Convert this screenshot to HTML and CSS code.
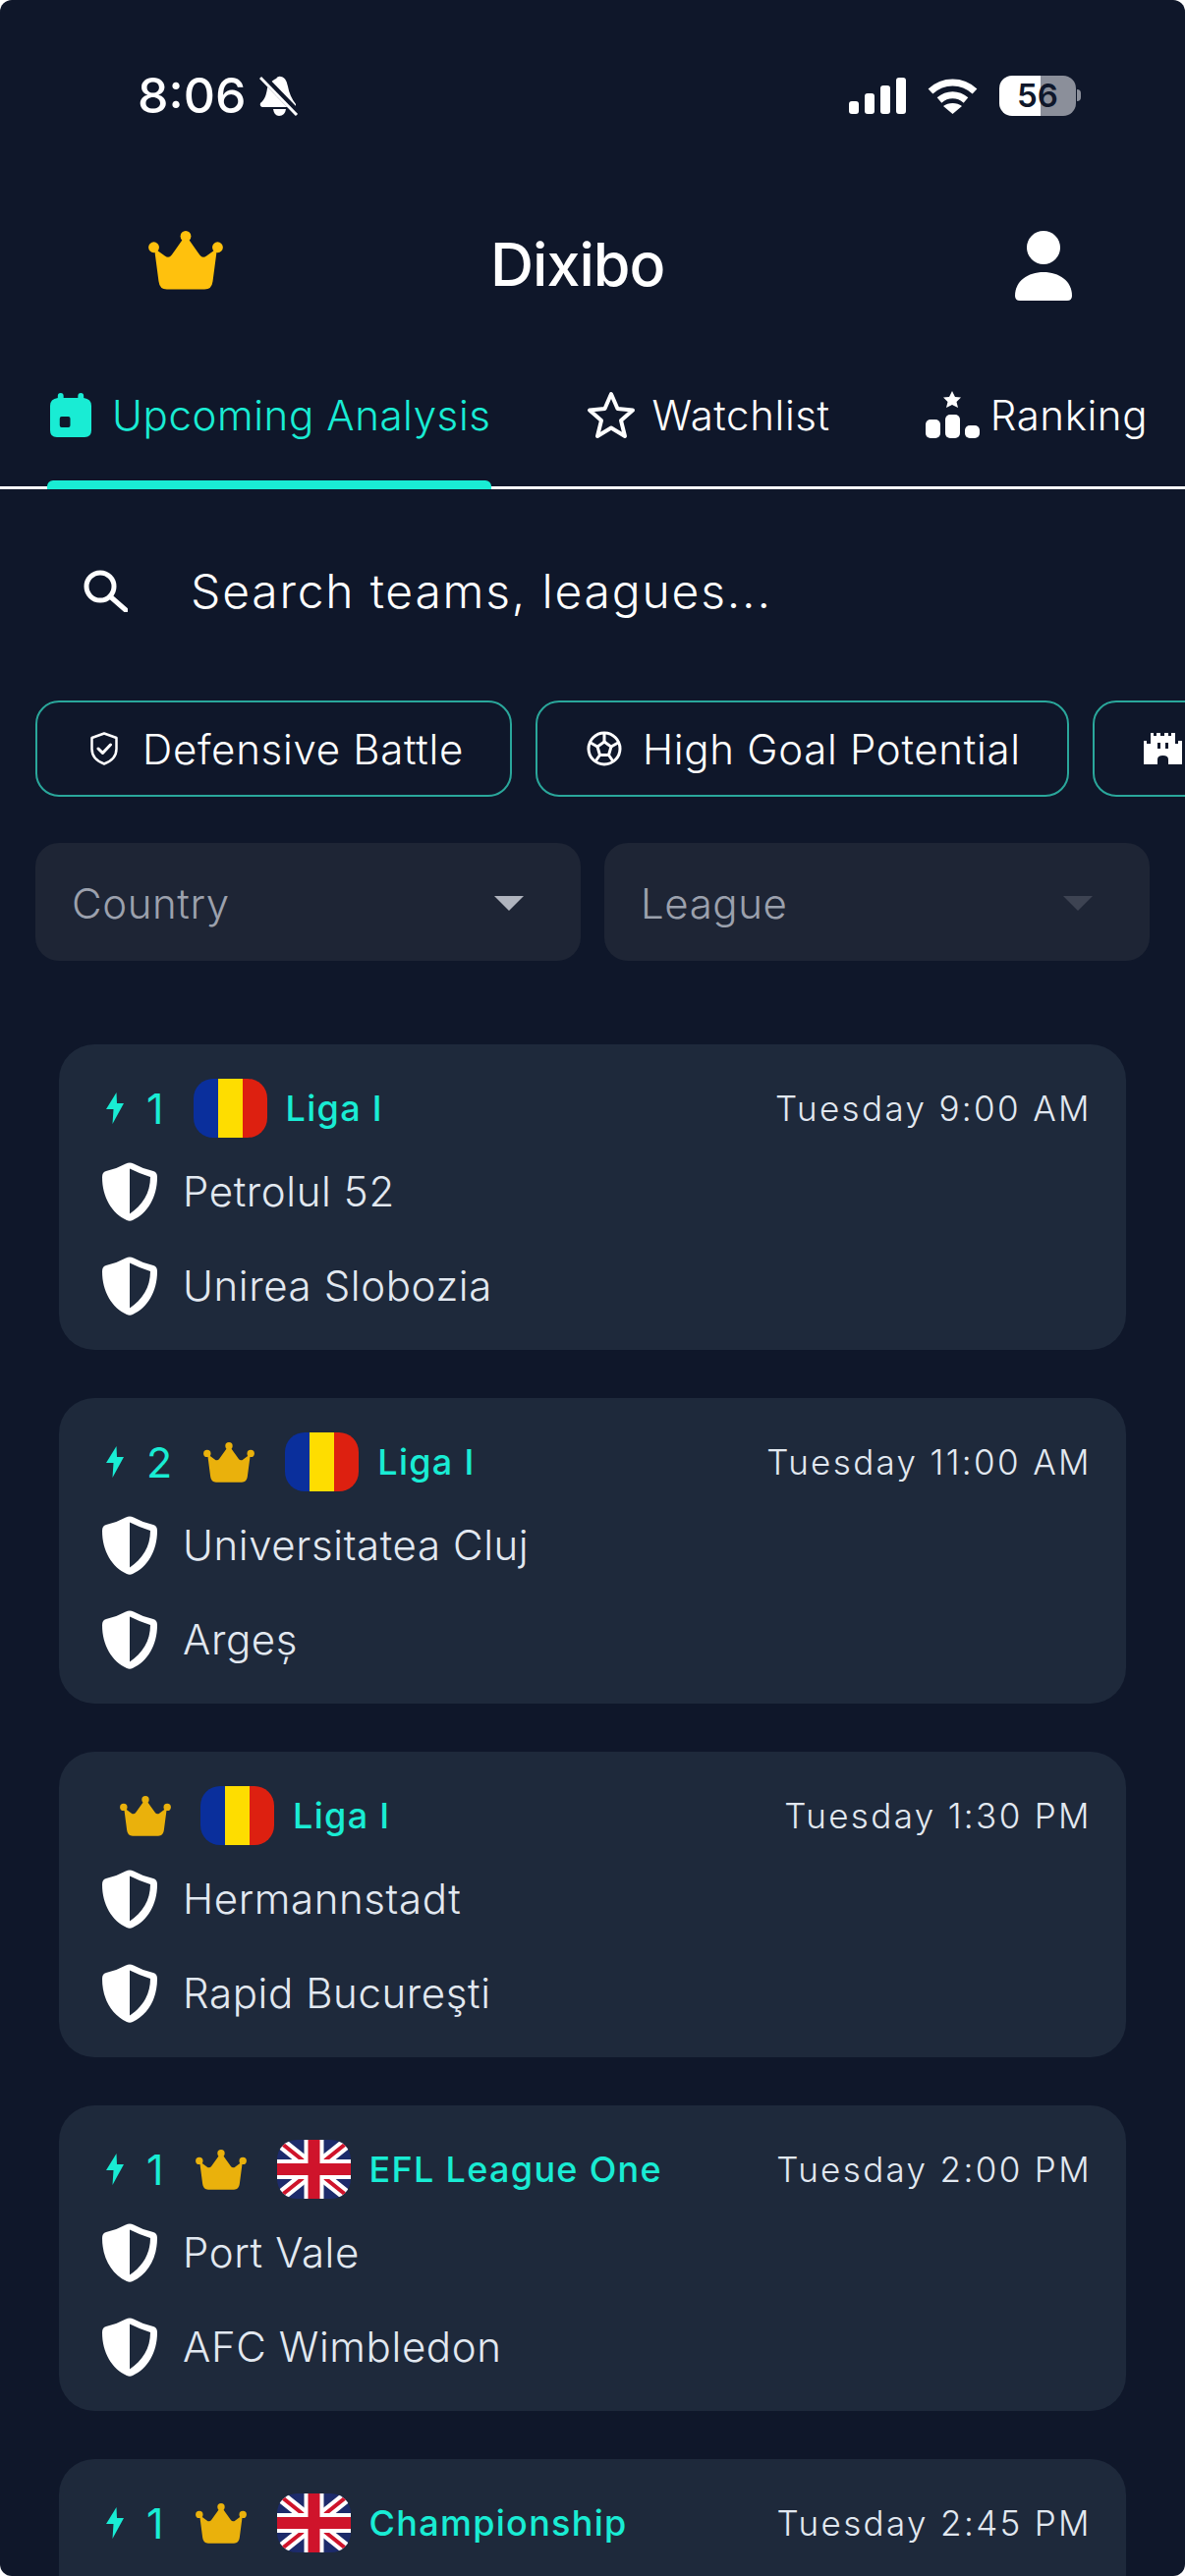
FILE: index.html
```html
<!DOCTYPE html>
<html lang="en">

<head>
  <meta charset="UTF-8">
  <meta name="viewport" content="width=device-width, initial-scale=1.0">
  <title>Dixibo</title>
  <link rel="stylesheet" href="styles.css">
</head>

<body>
  <svg class="defs" width="0" height="0" aria-hidden="true">
    <symbol id="crown" viewBox="0 0 77 61">
      <path d="M6 18 L10.500 52 Q11.500 60.500 19 60.500 L58 60.500 Q65.500 60.500 66.500 52 L71 18 L60 26 Q56 29 53 25 L41 8 L36 8 L24 25 Q21 29 17 26Z" />
      <circle cx="38.500" cy="5.500" r="5.500" />
      <circle cx="5.500" cy="17" r="5.500" />
      <circle cx="71.500" cy="17" r="5.500" />
    </symbol>
    <symbol id="bolt" viewBox="0 0 18 32">
      <path d="M10.500 0 L0 17 L7.500 17 L6.500 32 L18 11 L11 11Z" />
    </symbol>
    <symbol id="team-shield" viewBox="0 0 56 60">
      <path fill-rule="evenodd" d="M24 1.500 Q28 -0.500 32 1.500 Q42 7 52 9 Q56 10 56 15 C56 36 46 52 31 59 Q28 60.500 25 59 C10 52 0 36 0 15 Q0 10 4 9 Q14 7 24 1.500Z M28 6.500 L28 52.500 C41 44 49 31 49 15 Q39 12 28 6.500Z" />
    </symbol>
    <symbol id="flag-ro" viewBox="0 0 75 60">
      <rect width="25" height="60" fill="#0a2f9c" />
      <rect x="25" width="25" height="60" fill="#fedd00" />
      <rect x="50" width="25" height="60" fill="#dd2010" />
    </symbol>
    <symbol id="flag-uk" viewBox="0 0 75 60">
      <rect width="75" height="60" fill="#1d2b6b" />
      <path d="M0 0 L75 60 M75 0 L0 60" stroke="#fff" stroke-width="12" />
      <path d="M0 0 L75 60 M75 0 L0 60" stroke="#cf142b" stroke-width="4" />
      <path d="M37.5 0 V60 M0 30 H75" stroke="#fff" stroke-width="20" />
      <path d="M37.5 0 V60 M0 30 H75" stroke="#cf142b" stroke-width="12" />
    </symbol>
  </svg>

  <div class="screen">
    <div class="status-bar">
      <div class="status-left">
        <span class="clock">8:06</span>
        <svg class="bell" viewBox="0 0 40 41">
          <path fill="#fff" d="M22 1 C27 2 28 7 29 11 C30 17 33 24 37 29 L37 32 L3 32 Q0 31 1 28 C6 24 7 19 8 13 C9 8 13 5 17 3 Q19 0 22 1Z" />
          <path fill="#fff" d="M14 34 L27 34 Q26 41 20 41 Q15 41 14 34Z" />
          <path d="M2 0 L40 39" stroke="#0f172a" stroke-width="7" />
          <path d="M1 2 L38 40" stroke="#fff" stroke-width="3" />
        </svg>
      </div>
      <div class="status-right">
        <svg class="signal" viewBox="0 0 58 37" fill="#fff">
          <rect y="24" width="10" height="13" rx="3" />
          <rect x="16" y="16" width="10" height="21" rx="3" />
          <rect x="32" y="8" width="10" height="29" rx="3" />
          <rect x="48" width="10" height="37" rx="3" />
        </svg>
        <svg class="wifi" viewBox="0 0 51 37" fill="none" stroke="#fff" stroke-width="7">
          <path d="M3 14 C16 2 35 2 48 14" />
          <path d="M12 23 C20 16 31 16 39 23" />
          <path fill="#fff" stroke="none" d="M25.500 37 L16 29 C21 25 30 25 35 29Z" />
        </svg>
        <div class="battery">
          <span class="battery-level">56</span>
          <span class="battery-nub"></span>
        </div>
      </div>
    </div>

    <header class="app-header">
      <svg class="header-crown"><use href="#crown" /></svg>
      <h1>Dixibo</h1>
      <svg class="header-user" viewBox="0 0 58 71" fill="#fff">
        <circle cx="29" cy="17" r="17" />
        <path d="M0 66 C0 51 13 42 29 42 C45 42 58 51 58 66 Q58 71 53 71 L5 71 Q0 71 0 66Z" />
      </svg>
    </header>

    <nav class="tabs">
      <a class="tab tab-active">
        <svg class="tab-icon-calendar" viewBox="0 0 43 45" preserveAspectRatio="none" fill="#19ecd4">
          <path fill-rule="evenodd" d="M8 3 Q8 0 11 0 Q14 0 14 3 L14 5 L29 5 L29 3 Q29 0 32 0 Q35 0 35 3 L35 5 Q43 6 43 13 L43 38 Q43 45 36 45 L7 45 Q0 45 0 38 L0 13 Q0 6 8 5Z M12 24 Q10 24 10 26 L10 33 Q10 35 12 35 L19 35 Q21 35 21 33 L21 26 Q21 24 19 24Z" />
        </svg>
        Upcoming Analysis
      </a>
      <a class="tab">
        <svg class="tab-icon-star" viewBox="0 0 50 49" fill="none" stroke="#fff" stroke-width="4" stroke-linejoin="round">
          <path d="M25 3 L31.500 18 L47 19.500 L35 30 L39 46 L25 37.500 L11 46 L15 30 L3 19.500 L18.500 18Z" />
        </svg>
        Watchlist
      </a>
      <a class="tab">
        <svg class="tab-icon-ranking" viewBox="0 0 55 48" fill="#fff">
          <path d="M27 0 L30 6 L36 6.500 L31.500 11 L33 17 L27 14 L21 17 L22.500 11 L18 6.500 L24 6Z" />
          <rect y="29" width="15" height="19" rx="5" />
          <rect x="20" y="24" width="15" height="24" rx="5" />
          <rect x="40" y="35" width="15" height="13" rx="5" />
        </svg>
        Ranking
      </a>
    </nav>

    <div class="search">
      <svg class="search-icon" viewBox="0 0 45 43" fill="none" stroke="#fff" stroke-width="5">
        <circle cx="17" cy="17" r="14" />
        <path d="M27 27 L43 41" stroke-linecap="round" />
      </svg>
      <span>Search teams, leagues...</span>
    </div>

    <div class="chips">
      <div class="chip">
        <svg class="chip-shield" viewBox="0 0 28 34" fill="none" stroke="#fff" stroke-width="2.500" stroke-linejoin="round" stroke-linecap="round">
          <path d="M14 1.500 L26.500 6 L26.500 17 C26.500 25 21 30 14 32.500 C7 30 1.500 25 1.500 17 L1.500 6Z" />
          <path d="M8 17 L12.500 21.500 L20.500 13" stroke-width="3" />
        </svg>
        Defensive Battle
      </div>
      <div class="chip">
        <svg class="chip-ball" viewBox="0 0 36 36" fill="none" stroke="#fff" stroke-width="3">
          <circle cx="18" cy="18" r="16" />
          <path d="M18 11 L25 16 L22.500 24.500 L13.500 24.500 L11 16Z" />
          <path d="M18 11 L18 3 M25 16 L32 12 M22.500 24.500 L27 31 M13.500 24.500 L9 31 M11 16 L4 12" />
        </svg>
        High Goal Potential
      </div>
      <div class="chip">
        <svg class="chip-castle" viewBox="0 0 39 32" fill="#fff">
          <path fill-rule="evenodd" d="M7 0 L10 0 L10 3 L13 3 L13 0 L17 0 L17 3 L21 3 L21 0 L25 0 L25 3 L28 3 L28 0 L32 0 L32 11 L35 11 L35 8 L39 8 L39 32 L25 32 L25 27 Q25 23 19.500 23 Q14 23 14 27 L14 32 L0 32 L0 8 L3 8 L3 11 L7 11Z M14 10 L14 16 L17 16 L17 10Z M22 10 L22 16 L25 16 L25 10Z" />
        </svg>
      </div>
    </div>

    <div class="filters">
      <div class="select">
        <span>Country</span>
        <span class="caret"></span>
      </div>
      <div class="select select-disabled">
        <span>League</span>
        <span class="caret"></span>
      </div>
    </div>

    <main class="matches">
      <article class="card">
        <div class="card-top">
          <div class="card-meta">
            <span class="rank"><svg class="bolt"><use href="#bolt" /></svg>1</span>
            <svg class="flag"><use href="#flag-ro" /></svg>
            <span class="league">Liga I</span>
          </div>
          <span class="kickoff">Tuesday 9:00 AM</span>
        </div>
        <div class="team"><svg class="shield"><use href="#team-shield" /></svg>Petrolul 52</div>
        <div class="team"><svg class="shield"><use href="#team-shield" /></svg>Unirea Slobozia</div>
      </article>

      <article class="card">
        <div class="card-top">
          <div class="card-meta">
            <span class="rank"><svg class="bolt"><use href="#bolt" /></svg>2</span>
            <svg class="crown"><use href="#crown" /></svg>
            <svg class="flag"><use href="#flag-ro" /></svg>
            <span class="league">Liga I</span>
          </div>
          <span class="kickoff">Tuesday 11:00 AM</span>
        </div>
        <div class="team"><svg class="shield"><use href="#team-shield" /></svg>Universitatea Cluj</div>
        <div class="team"><svg class="shield"><use href="#team-shield" /></svg>Argeș</div>
      </article>

      <article class="card">
        <div class="card-top">
          <div class="card-meta card-meta-unranked">
            <svg class="crown"><use href="#crown" /></svg>
            <svg class="flag"><use href="#flag-ro" /></svg>
            <span class="league">Liga I</span>
          </div>
          <span class="kickoff">Tuesday 1:30 PM</span>
        </div>
        <div class="team"><svg class="shield"><use href="#team-shield" /></svg>Hermannstadt</div>
        <div class="team"><svg class="shield"><use href="#team-shield" /></svg>Rapid Bucureşti</div>
      </article>

      <article class="card">
        <div class="card-top">
          <div class="card-meta">
            <span class="rank"><svg class="bolt"><use href="#bolt" /></svg>1</span>
            <svg class="crown"><use href="#crown" /></svg>
            <svg class="flag"><use href="#flag-uk" /></svg>
            <span class="league">EFL League One</span>
          </div>
          <span class="kickoff">Tuesday 2:00 PM</span>
        </div>
        <div class="team"><svg class="shield"><use href="#team-shield" /></svg>Port Vale</div>
        <div class="team"><svg class="shield"><use href="#team-shield" /></svg>AFC Wimbledon</div>
      </article>

      <article class="card">
        <div class="card-top">
          <div class="card-meta">
            <span class="rank"><svg class="bolt"><use href="#bolt" /></svg>1</span>
            <svg class="crown"><use href="#crown" /></svg>
            <svg class="flag"><use href="#flag-uk" /></svg>
            <span class="league">Championship</span>
          </div>
          <span class="kickoff">Tuesday 2:45 PM</span>
        </div>
      </article>
    </main>
  </div>
</body>

</html>
```

FILE: styles.css
```css
* {
  box-sizing: border-box;
}

html,
body {
  margin: 0;
  padding: 0;
  height: 2622px;
  overflow: hidden;
  background: #fff;
}

body {
  font-family: "Inter", "Liberation Sans", sans-serif;
  color: #fff;
}

.defs {
  display: block;
  height: 0;
}

.screen {
  height: 2622px;
  overflow: hidden;
  border-radius: 12px;
  background: #0f172a;
}

/* status bar */
.status-bar {
  height: 194px;
  padding: 72px 106px 0 140px;
  display: flex;
  justify-content: space-between;
  align-items: flex-start;
}

.status-left {
  display: flex;
  align-items: center;
  gap: 14px;
  height: 50px;
}

.clock {
  font-size: 50px;
  font-weight: 500;
  line-height: 50px;
}

.bell {
  width: 40px;
  height: 41px;
}

.status-right {
  display: flex;
  align-items: center;
  height: 50px;
}

.signal {
  width: 58px;
  height: 37px;
}

.wifi {
  width: 51px;
  height: 37px;
  margin-left: 22px;
}

.battery {
  margin-left: 22px;
  display: flex;
  align-items: center;
}

.battery-level {
  width: 78px;
  height: 41px;
  border-radius: 13px;
  background: linear-gradient(to right, #fff 54%, #8b8f9a 54%);
  color: #0f172a;
  font-size: 33px;
  font-weight: 600;
  line-height: 41px;
  text-align: center;
}

.battery-nub {
  width: 4px;
  height: 12px;
  margin-left: 1px;
  border-radius: 0 4px 4px 0;
  background: #8b8f9a;
}

/* header */
.app-header {
  height: 150px;
  padding: 40px 115px 0 150px;
  display: flex;
  align-items: flex-start;
}

.header-crown {
  width: 78px;
  height: 60px;
  margin-top: 1px;
  fill: #ffc10d;
}

.app-header h1 {
  margin: 0 auto 0 271px;
  font-size: 61px;
  font-weight: 500;
  line-height: 70px;
  letter-spacing: -1px;
}

.header-user {
  width: 58px;
  height: 71px;
  margin-top: 1px;
}

/* tabs */
.tabs {
  height: 154px;
  padding: 52px 0 0 48px;
  display: flex;
  align-items: flex-start;
  gap: 97px;
  border-bottom: 3px solid #fff;
  white-space: nowrap;
}

.tab {
  position: relative;
  display: flex;
  align-items: center;
  gap: 21px;
  height: 52px;
  font-size: 42px;
  font-weight: 350;
  letter-spacing: 0.6px;
}

.tab-active {
  color: #19ecd4;
}

.tab-active::after {
  content: "";
  position: absolute;
  left: 0;
  right: 0;
  top: 93px;
  height: 9px;
  border-radius: 6px 6px 0 0;
  background: #19ecd4;
}

.tab-icon-calendar {
  width: 42px;
  height: 45px;
  margin-left: 3px;
}

.tab-icon-star {
  width: 50px;
  height: 49px;
  margin-right: -4px;
}

.tab-icon-ranking {
  width: 55px;
  height: 48px;
  margin-right: -10px;
}

/* search */
.search {
  height: 206px;
  padding-left: 85px;
  display: flex;
  align-items: center;
  gap: 64px;
  font-size: 48px;
  font-weight: 350;
  letter-spacing: 1.8px;
}

.search-icon {
  width: 45px;
  height: 43px;
}

/* chips */
.chips {
  margin-top: 9px;
  padding-left: 36px;
  display: flex;
  gap: 24px;
  white-space: nowrap;
}

.chip {
  height: 98px;
  padding: 0 47px 0 50px;
  display: flex;
  align-items: center;
  gap: 25px;
  flex-shrink: 0;
  border: 2px solid #2aa79b;
  border-radius: 24px;
  font-size: 42px;
  font-weight: 350;
  letter-spacing: 0.7px;
}

.chip-shield {
  width: 28px;
  height: 34px;
  margin-left: 4px;
}

.chip-ball {
  width: 36px;
  height: 36px;
  margin-right: -4px;
}

.chip-castle {
  width: 39px;
  height: 32px;
}

/* filters */
.filters {
  margin-top: 47px;
  padding: 0 36px;
  display: grid;
  grid-template-columns: 1fr 1fr;
  gap: 24px;
}

.select {
  height: 120px;
  padding: 2px 58px 0 37px;
  display: flex;
  align-items: center;
  justify-content: space-between;
  border-radius: 24px;
  background: #1e2535;
  color: #9ca1ad;
  font-size: 42px;
  font-weight: 350;
  letter-spacing: 0.6px;
}

.caret {
  width: 0;
  height: 0;
  border-left: 15px solid transparent;
  border-right: 15px solid transparent;
  border-top: 15px solid #b0b4be;
}

.select-disabled .caret {
  border-top-color: #3d4352;
}

/* match cards */
.matches {
  margin-top: 85px;
  padding: 0 60px;
  display: flex;
  flex-direction: column;
  gap: 49px;
}

.card {
  flex-shrink: 0;
  height: 311px;
  padding: 35px 35px 0 44px;
  border-radius: 36px;
  background: #1e293b;
}

.card-top {
  display: flex;
  justify-content: space-between;
  align-items: center;
  height: 60px;
  margin-bottom: 25px;
}

.card-meta {
  display: flex;
  align-items: center;
  gap: 30px;
}

.card-meta-unranked {
  padding-left: 18px;
}

.rank {
  display: flex;
  align-items: center;
  gap: 23px;
  padding-left: 4px;
  color: #19ecd4;
  font-size: 43px;
  font-weight: 400;
}

.bolt {
  width: 18px;
  height: 32px;
  fill: #19ecd4;
}

.crown {
  width: 52px;
  height: 41px;
  fill: #eab10c;
}

.rank + .crown {
  margin: 0 1px 0 2px;
}

.flag {
  width: 75px;
  height: 60px;
  border-radius: 20px;
}

.league {
  margin-left: -11px;
  color: #19ecd4;
  font-size: 36px;
  font-weight: 450;
  letter-spacing: 1.3px;
}

.kickoff {
  color: #e2e8f0;
  font-size: 35px;
  font-weight: 300;
  letter-spacing: 2.35px;
}

.team {
  display: flex;
  align-items: center;
  gap: 26px;
  height: 60px;
  margin-bottom: 36px;
  padding-bottom: 2px;
  color: #e2e8f0;
  font-size: 42px;
  font-weight: 300;
  letter-spacing: 0.6px;
}

.shield {
  width: 56px;
  height: 60px;
  margin-top: 2px;
  fill: #fff;
  flex-shrink: 0;
}
```
